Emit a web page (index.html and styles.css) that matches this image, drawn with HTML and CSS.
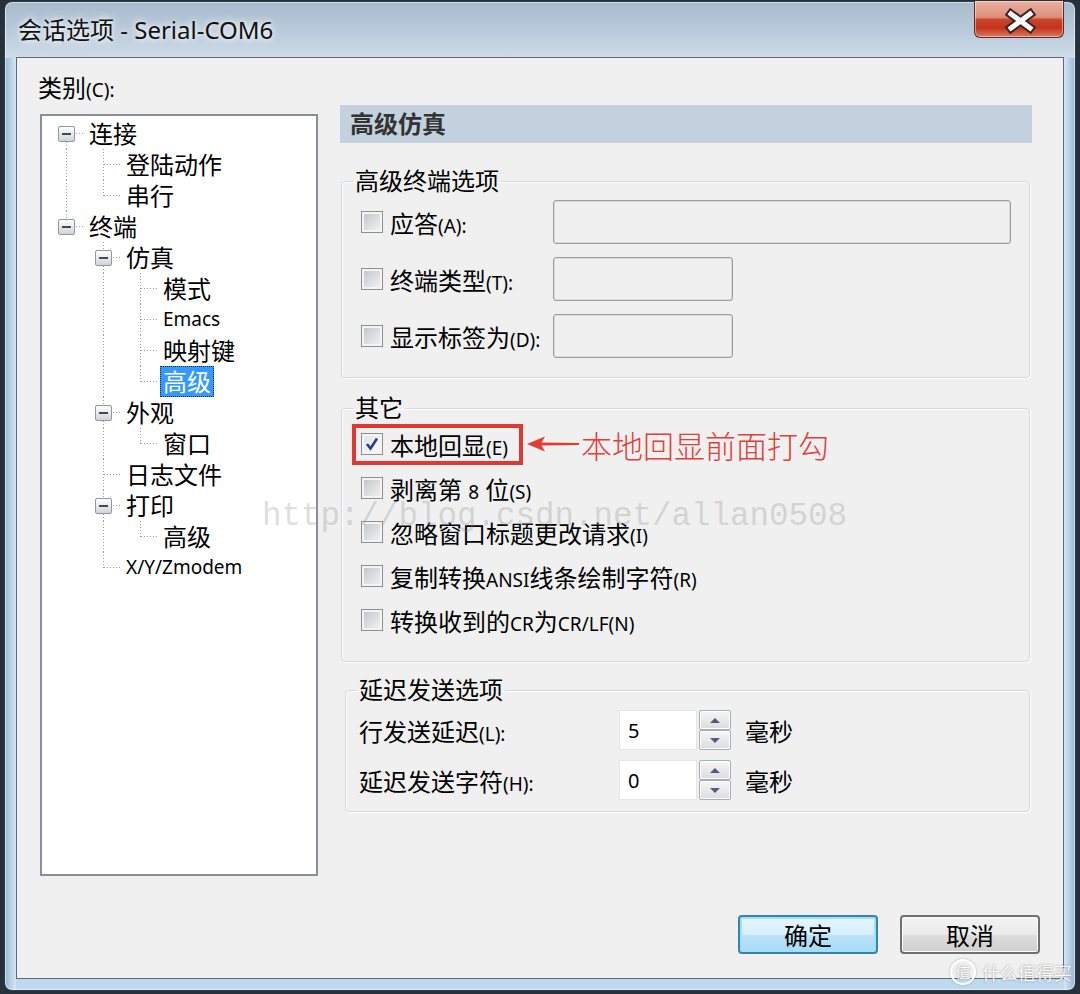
FILE: index.html
```html
<!DOCTYPE html>
<html lang="zh-CN">
<head>
<meta charset="UTF-8">
<meta name="viewport" content="width=device-width, initial-scale=1.0">
<title>会话选项 - Serial-COM6</title>
<link rel="stylesheet" href="styles.css">
</head>
<body>
<div class="window">
  <div class="titlebar">
    <span class="title">会话选项 - Serial-COM6</span>
    <button class="close" type="button" aria-label="关闭">
      <svg width="90" height="37" viewBox="0 0 90 37">
        <path d="M36 13 L55 27 M55 13 L36 27" stroke="#3a2522" stroke-width="9" stroke-linecap="square"/>
        <path d="M36 13 L55 27 M55 13 L36 27" stroke="#fff" stroke-width="5" stroke-linecap="square"/>
      </svg>
    </button>
  </div>

  <div class="client">
    <div class="main">
      <div class="side">
        <div class="cat-label">类别<span class="en">(C):</span></div>
        <div class="tree">
          <div class="node"><span class="cell first"><i class="box"></i></span><span class="text">连接</span></div>
          <div class="node"><span class="cell pipe"></span><span class="cell tee"></span><span class="text">登陆动作</span></div>
          <div class="node"><span class="cell pipe"></span><span class="cell elbow"></span><span class="text">串行</span></div>
          <div class="node"><span class="cell elbow"><i class="box"></i></span><span class="text">终端</span></div>
          <div class="node"><span class="cell"></span><span class="cell tee"><i class="box"></i></span><span class="text">仿真</span></div>
          <div class="node"><span class="cell"></span><span class="cell pipe"></span><span class="cell tee"></span><span class="text">模式</span></div>
          <div class="node"><span class="cell"></span><span class="cell pipe"></span><span class="cell tee"></span><span class="text en">Emacs</span></div>
          <div class="node"><span class="cell"></span><span class="cell pipe"></span><span class="cell tee"></span><span class="text">映射键</span></div>
          <div class="node"><span class="cell"></span><span class="cell pipe"></span><span class="cell elbow"></span><span class="text sel">高级</span></div>
          <div class="node"><span class="cell"></span><span class="cell tee"><i class="box"></i></span><span class="text">外观</span></div>
          <div class="node"><span class="cell"></span><span class="cell pipe"></span><span class="cell elbow"></span><span class="text">窗口</span></div>
          <div class="node"><span class="cell"></span><span class="cell tee"></span><span class="text">日志文件</span></div>
          <div class="node"><span class="cell"></span><span class="cell tee"><i class="box"></i></span><span class="text">打印</span></div>
          <div class="node"><span class="cell"></span><span class="cell pipe"></span><span class="cell elbow"></span><span class="text">高级</span></div>
          <div class="node"><span class="cell"></span><span class="cell elbow"></span><span class="text en">X/Y/Zmodem</span></div>
        </div>
      </div>

      <div class="panel">
        <div class="panel-head">高级仿真</div>

        <fieldset class="group g-term">
          <legend>高级终端选项</legend>
          <div class="rows">
            <div class="row">
              <label class="check"><span class="cb"></span><span>应答<span class="en">(A):</span></span></label>
              <span class="field wide"></span>
            </div>
            <div class="row">
              <label class="check"><span class="cb"></span><span>终端类型<span class="en">(T):</span></span></label>
              <span class="field"></span>
            </div>
            <div class="row">
              <label class="check"><span class="cb"></span><span>显示标签为<span class="en">(D):</span></span></label>
              <span class="field"></span>
            </div>
          </div>
        </fieldset>

        <fieldset class="group g-other">
          <legend>其它</legend>
          <div class="rows">
            <div class="row marked">
              <label class="check mark"><span class="cb on">
                <svg width="20" height="20" viewBox="0 0 20 20"><path d="M5 10 L8.5 14.5 L15 4.5" fill="none" stroke="#23408c" stroke-width="2.6"/></svg>
              </span><span>本地回显<span class="en">(E)</span></span></label>
              <svg class="arrow" width="52" height="18" viewBox="0 0 52 18"><path d="M0 9 L18 1.5 L14.5 7.5 L52 8 L52 10 L14.5 10.5 L18 16.5 Z" fill="#e23b31"/></svg>
              <span class="note">本地回显前面打勾</span>
            </div>
            <div class="row"><label class="check"><span class="cb"></span><span>剥离第 <span class="en">8</span> 位<span class="en">(S)</span></span></label></div>
            <div class="row"><label class="check"><span class="cb"></span><span>忽略窗口标题更改请求<span class="en">(I)</span></span></label></div>
            <div class="row"><label class="check"><span class="cb"></span><span>复制转换<span class="en">ANSI</span>线条绘制字符<span class="en">(R)</span></span></label></div>
            <div class="row"><label class="check"><span class="cb"></span><span>转换收到的<span class="en">CR</span>为<span class="en">CR/LF(N)</span></span></label></div>
          </div>
        </fieldset>

        <fieldset class="group g-delay">
          <legend>延迟发送选项</legend>
          <div class="rows">
            <div class="row">
              <span class="delay-label">行发送延迟<span class="en">(L):</span></span>
              <span class="spin-input">5</span>
              <span class="spin-btns"><i class="up"></i><i class="down"></i></span>
              <span class="unit">毫秒</span>
            </div>
            <div class="row">
              <span class="delay-label">延迟发送字符<span class="en">(H):</span></span>
              <span class="spin-input">0</span>
              <span class="spin-btns"><i class="up"></i><i class="down"></i></span>
              <span class="unit">毫秒</span>
            </div>
          </div>
        </fieldset>
      </div>
    </div>

    <div class="buttons">
      <button type="button" class="btn default">确定</button>
      <button type="button" class="btn">取消</button>
    </div>
  </div>

  <div class="watermark">http://blog.csdn.net/allan0508</div>
  <div class="brand"><span class="brand-icon">值</span>什么值得买</div>
</div>
</body>
</html>
```

FILE: styles.css
```css
* {
  box-sizing: border-box;
}

body {
  margin: 0;
  padding: 1px 4px 0 4px;
  background-color: #27313b;
  font-family: "Noto Sans", "Noto Sans CJK SC", sans-serif;
  font-size: 24px;
  color: #000;
}

/* window frame */
.window {
  position: relative;
  width: 1072px;
  height: 990px;
  border: 1px solid #2e3a46;
  border-radius: 8px;
  padding: 0 11px 11px 11px;
  display: flex;
  flex-direction: column;
  background:
    linear-gradient(to right, #97b8d7, #d6e6f3) 0 56px / 11px 100% no-repeat,
    linear-gradient(to left, #97b8d7, #d6e6f3) 100% 56px / 11px 100% no-repeat,
    linear-gradient(to bottom, #a8bbcd 0, #b9cadb 30px, #cfdce8 55px, #bdd7ee 56px, #bfd9ef 100%);
  box-shadow: inset 0 0 0 1px rgba(255, 255, 255, 0.5);
}

.titlebar {
  height: 55px;
  flex: none;
  display: flex;
  align-items: center;
  padding-bottom: 2px;
}

.title {
  margin-left: 2px;
  font-size: 24px;
  color: #111;
  text-shadow: 0 0 10px #fff, 0 0 5px rgba(255, 255, 255, 0.8);
}

.close {
  margin-left: auto;
  align-self: flex-start;
  margin-top: -1px;
  width: 90px;
  height: 37px;
  padding: 0;
  border: 1px solid #5b2a22;
  border-top: none;
  border-radius: 0 0 6px 6px;
  background: linear-gradient(to bottom, #eab0a2 0%, #dd8f7b 45%, #c8442b 52%, #c5331b 75%, #d97a5f 100%);
  box-shadow: inset 0 0 0 1px rgba(255, 255, 255, 0.45);
}

.close svg {
  display: block;
}

/* dialog client area */
.client {
  flex: 1;
  border: 1px solid #5e6a77;
  background-color: #f0f0f0;
  padding: 0 23px 24px 23px;
  display: flex;
  flex-direction: column;
}

.main {
  display: flex;
  gap: 22px;
  height: 818px;
  flex: none;
}

.en {
  font-size: 19px;
}

/* category tree */
.side {
  width: 278px;
  display: flex;
  flex-direction: column;
}

.cat-label {
  height: 56px;
  padding-top: 16px;
  line-height: 28px;
  margin-left: -2px;
}

.tree {
  flex: 1;
  background-color: #fff;
  border: 2px solid #8b8e92;
  padding: 2px 0 0 6px;
  --dotv: repeating-linear-gradient(to bottom, #9c9c9c 0 1px, transparent 1px 3px);
  --doth: repeating-linear-gradient(to right, #9c9c9c 0 1px, transparent 1px 3px);
}

.node {
  display: flex;
  height: 31px;
  line-height: 31px;
  white-space: nowrap;
}

.cell {
  width: 37px;
  flex: none;
  display: flex;
  align-items: center;
}

.pipe {
  background: var(--dotv) 18px 0 / 1px 100% no-repeat;
}

.tee {
  background:
    var(--dotv) 18px 0 / 1px 100% no-repeat,
    var(--doth) 19px 15px / 18px 1px no-repeat;
}

.elbow {
  background:
    var(--dotv) 18px 0 / 1px 16px no-repeat,
    var(--doth) 19px 15px / 18px 1px no-repeat;
}

.first {
  background:
    var(--dotv) 18px 15px / 1px 16px no-repeat,
    var(--doth) 19px 15px / 18px 1px no-repeat;
}

.box {
  width: 17px;
  height: 16px;
  margin-left: 10px;
  border: 1px solid #8e99a6;
  border-radius: 2px;
  background: linear-gradient(to bottom, #fff, #d3d3d3);
  display: flex;
  align-items: center;
  justify-content: center;
}

.box::after {
  content: "";
  width: 9px;
  height: 2px;
  background-color: #3d4a5a;
}

.text {
  margin-left: 4px;
}

.sel {
  margin-left: 1px;
  padding: 0 3px;
  background-color: #3399ff;
  color: #fff;
  outline: 1px dotted #1b2a3a;
  outline-offset: -1px;
}

/* right panel */
.panel {
  width: 692px;
  padding-top: 47px;
}

.panel-head {
  height: 38px;
  line-height: 38px;
  padding-left: 10px;
  background-color: #c4d1de;
  font-weight: bold;
  color: #333;
}

.group {
  margin: 0 2px 0 1px;
  padding: 0;
  min-width: 0;
  border: 1px solid #d2dae0;
  border-radius: 4px;
  box-shadow: inset 1px 1px 0 #fff, 1px 1px 0 #fff;
}

.group legend {
  margin-left: 11px;
  padding: 0 2px;
  line-height: 28px;
}

.rows {
  display: flex;
  flex-direction: column;
}

.row {
  display: flex;
  align-items: center;
  height: 44px;
}

.check {
  display: flex;
  align-items: center;
  white-space: pre;
}

.cb {
  width: 22px;
  height: 22px;
  flex: none;
  margin-right: 7px;
  border: 1px solid #8e8f8f;
  background: linear-gradient(135deg, #bfc3c7, #f5f5f5);
  box-shadow: inset 0 0 0 2px #f4f4f4;
  display: flex;
  align-items: center;
  justify-content: center;
}

.cb.on {
  background: linear-gradient(135deg, #dfe3e8, #fbfbfb);
}

.g-term {
  margin-top: 24px;
}

.g-term .rows {
  padding: 5px 0 19px 19px;
  gap: 13px;
}

.g-term .check {
  width: 192px;
}

.field {
  width: 180px;
  height: 44px;
  border: 1px solid #9d9d9d;
  border-radius: 3px;
  box-shadow: inset 0 0 0 1px #dadada;
  background-color: #f0f0f0;
}

.field.wide {
  width: 458px;
}

.g-other {
  margin-top: 16px;
}

.g-other .rows {
  padding: 0 0 19px 19px;
}

.marked {
  margin-left: -9px;
}

.mark {
  width: 171px;
  height: 41px;
  border: 4px solid #de3a32;
  padding-left: 5px;
}

.arrow {
  margin-left: 4px;
}

.note {
  margin-left: 2px;
  font-size: 31px;
  font-weight: 300;
  color: #e0403a;
}

.g-delay {
  margin: 14px 2px 0 5px;
}

.g-delay .rows {
  padding: 6px 0 11px 13px;
  gap: 10px;
}

.g-delay .row {
  height: 40px;
}

.delay-label {
  width: 260px;
}

.spin-input {
  width: 78px;
  height: 40px;
  padding-left: 8px;
  line-height: 40px;
  font-size: 20px;
  background-color: #fff;
  border: 1px solid #e6e6e6;
}

.spin-btns {
  margin-left: 2px;
  width: 32px;
  height: 40px;
  display: flex;
  flex-direction: column;
}

.spin-btns i {
  flex: 1;
  border: 1px solid #a3afbd;
  border-radius: 2px;
  background: linear-gradient(to bottom, #f6f6f6, #dcdcdc);
  box-shadow: inset 0 0 0 1px #fff;
  display: flex;
  align-items: center;
  justify-content: center;
}

.spin-btns i::after {
  content: "";
  border-left: 5px solid transparent;
  border-right: 5px solid transparent;
}

.spin-btns .up::after {
  border-bottom: 5px solid #4a5f7d;
}

.spin-btns .down::after {
  border-top: 5px solid #4a5f7d;
}

.unit {
  margin-left: 14px;
}

/* bottom buttons */
.buttons {
  display: flex;
  justify-content: flex-end;
  gap: 22px;
  margin-top: 39px;
}

.btn {
  width: 140px;
  height: 39px;
  padding: 0;
  font-family: inherit;
  font-size: 24px;
  color: #000;
  border: 2px solid #707070;
  border-radius: 4px;
  background: linear-gradient(to bottom, #f3f3f3 0%, #ebebeb 50%, #dddddd 51%, #cfcfcf 100%);
  box-shadow: inset 0 0 0 1px #fbfbfb;
}

.btn.default {
  border-color: #3c7fb1;
  background: linear-gradient(to bottom, #e6f5fd 0%, #d6effc 50%, #bce4f9 51%, #a8d9f4 100%);
  box-shadow: inset 0 0 0 2px #9be2fb;
}

/* overlays */
.watermark {
  position: absolute;
  left: 257px;
  top: 497px;
  font-family: "Liberation Mono", monospace;
  font-size: 32.5px;
  line-height: 36px;
  color: rgba(140, 140, 140, 0.3);
  white-space: nowrap;
  pointer-events: none;
}

.brand {
  position: absolute;
  left: 945px;
  top: 957px;
  display: flex;
  align-items: center;
  font-size: 18px;
  color: rgba(255, 255, 255, 0.95);
  text-shadow: 0 0 2px rgba(70, 70, 70, 0.6);
  white-space: nowrap;
}

.brand-icon {
  width: 26px;
  height: 26px;
  margin-right: 6px;
  border: 2px solid rgba(255, 255, 255, 0.95);
  border-radius: 50%;
  box-shadow: 0 0 2px rgba(70, 70, 70, 0.5);
  font-size: 15px;
  line-height: 22px;
  text-align: center;
}
```
